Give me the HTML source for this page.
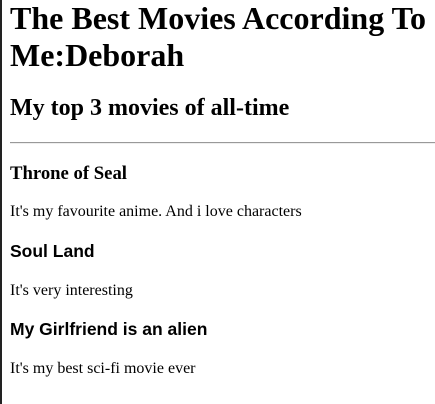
<!DOCTYPE html>
<html><head><style>
html,body{margin:0;background:#fff}
body{border-left:2px solid #222;padding-left:8px;min-height:404px;box-sizing:border-box;font-family:"Liberation Serif",serif;color:#000}
h1{font-size:32px;margin:0 0 20px;line-height:37px}
h2{font-size:24px;margin:20px 0;line-height:28px}
hr{margin:0;border:0;border-top:1px solid #999;border-bottom:1px solid #eee}
h3{font-size:18.7px;margin:18.7px 0;line-height:21px}
h3.s{font-family:"Liberation Sans",sans-serif;font-size:17.5px}
p{font-size:16px;margin:16px 0;line-height:20px}
</style></head><body>
<h1>The Best Movies According To Me:Deborah</h1>
<h2>My top 3 movies of all-time</h2>
<hr>
<h3>Throne of Seal</h3>
<p>It's my favourite anime. And i love characters</p>
<h3 class="s">Soul Land</h3>
<p>It's very interesting</p>
<h3 class="s">My Girlfriend is an alien</h3>
<p>It's my best sci-fi movie ever</p>
</body></html>
